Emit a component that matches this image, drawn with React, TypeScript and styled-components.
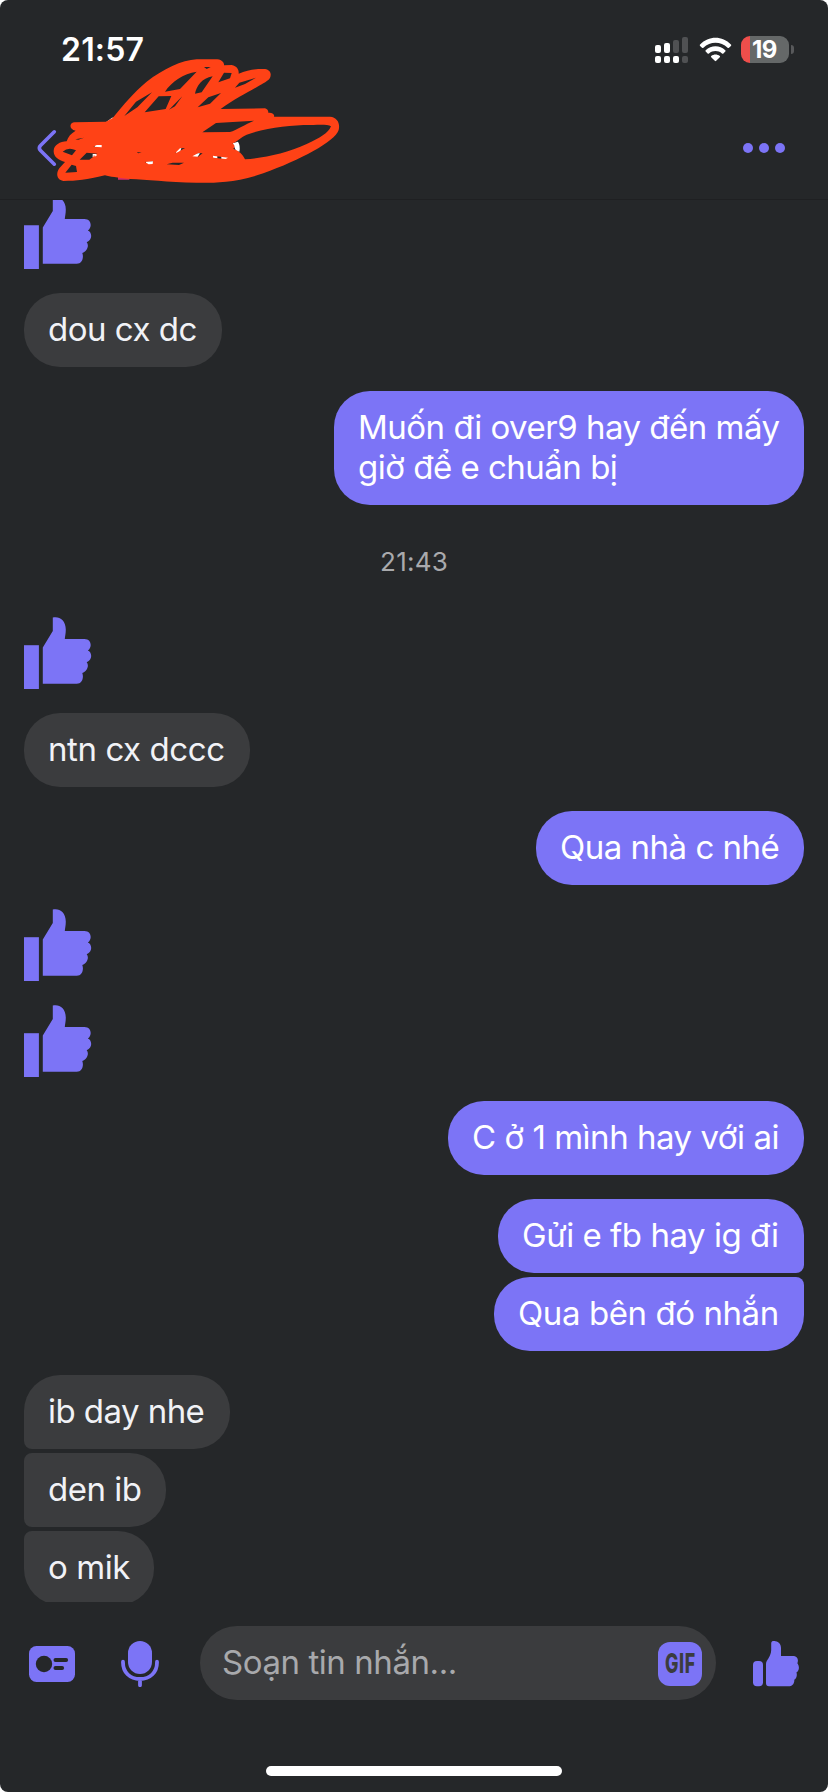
import React from "react";
import styled, { createGlobalStyle } from "styled-components";

const accent = "#7c74f6";
const surface = "#252729";
const raised = "#3b3c3e";

const GlobalStyle = createGlobalStyle`
  * { box-sizing: border-box; }
  body { margin: 0; background: #fff; font-family: Inter, "Noto Sans", sans-serif; }
`;

const Screen = styled.div`
  display: flex;
  flex-direction: column;
  width: 828px;
  height: 1792px;
  overflow: hidden;
  background: ${surface};
  border-radius: 8px;
`;

const Top = styled.header`
  position: relative;
  flex: none;
  height: 200px;
  border-bottom: 1px solid #1f2022;
`;

const StatusBar = styled.div`
  display: flex;
  align-items: center;
  height: 99px;
  padding: 0 34px 0 61px;
`;

const Clock = styled.span`
  color: #fff;
  font-size: 32px;
  font-weight: 600;
  letter-spacing: 0.2px;
  line-height: 40px;
  margin: 1px auto 0 0;
`;

const Signal = styled.svg`
  display: block;
  width: 33px;
  height: 26px;
  margin-right: 11px;
`;

const Wifi = styled.svg`
  display: block;
  width: 33px;
  height: 26px;
  margin-right: 9px;
`;

const Battery = styled.div`
  display: flex;
  align-items: center;
  justify-content: center;
  width: 48px;
  height: 27px;
  border-radius: 9px;
  background: linear-gradient(90deg, #ef4e4b 9.3px, #656868 9.3px);
  color: #fff;
  font-size: 24px;
  font-weight: 700;
  letter-spacing: -0.4px;
  padding-right: 1px;
`;

const BatteryTip = styled.i`
  width: 3px;
  height: 9px;
  margin-left: 2px;
  border-radius: 0 4px 4px 0;
  background: #58595b;
`;

const NavBar = styled.nav`
  display: flex;
  align-items: center;
  justify-content: space-between;
  height: 98px;
  padding: 0 43px 0 36px;
`;

const Glyph = styled.svg`
  display: block;
  flex: none;
`;

const Scribble = styled.svg`
  position: absolute;
  left: 0;
  top: 0;
  width: 360px;
  height: 190px;
`;

const Thread = styled.main`
  display: flex;
  flex: none;
  flex-direction: column;
  gap: 24px;
  height: 1402px;
  padding: 0 24px;
  overflow: hidden;
`;

const Group = styled.section<{ $mine?: boolean; $lift?: boolean }>`
  display: flex;
  flex: none;
  flex-direction: column;
  align-items: ${(p) => (p.$mine ? "flex-end" : "flex-start")};
  gap: 4px;
  margin-top: ${(p) => (p.$lift ? "-3px" : "0")};
`;

const Bubble = styled.p<{
  $mine?: boolean;
  $width: number;
  $spacing: number;
  $joinTop?: boolean;
  $joinBottom?: boolean;
}>`
  margin: 0;
  width: ${(p) => p.$width}px;
  padding: 16px 0 18px 24px;
  white-space: pre;
  font-size: 33px;
  line-height: 40px;
  letter-spacing: ${(p) => p.$spacing}px;
  color: ${(p) => (p.$mine ? "#fff" : "#f1f2f6")};
  background: ${(p) => (p.$mine ? accent : raised)};
  border-radius: 36px;
  ${(p) => p.$joinTop && `border-top-${p.$mine ? "right" : "left"}-radius: 8px;`}
  ${(p) => p.$joinBottom && `border-bottom-${p.$mine ? "right" : "left"}-radius: 8px;`}
`;

const Stamp = styled.time`
  flex: none;
  height: 64px;
  line-height: 66px;
  text-align: center;
  font-size: 26px;
  letter-spacing: 0.2px;
  color: #a9aaad;
`;

const Composer = styled.footer`
  display: flex;
  align-items: center;
  height: 122px;
  padding: 0 29px 0 29px;
`;

const Slot = styled.div<{ $gap: number }>`
  display: flex;
  margin: 2px ${(p) => p.$gap}px 0 0;
`;

const Field = styled.div`
  display: flex;
  align-items: center;
  justify-content: space-between;
  width: 516px;
  height: 74px;
  margin-right: 37px;
  padding: 0 14px 0 22px;
  border-radius: 37px;
  background: ${raised};
`;

const Placeholder = styled.span`
  color: #a8a9ac;
  font-size: 33px;
  letter-spacing: -0.43px;
  line-height: 40px;
  margin-bottom: 2px;
`;

const GifBadge = styled.div`
  display: flex;
  align-items: center;
  justify-content: center;
  width: 44px;
  height: 44px;
  margin-top: 2px;
  border-radius: 12px;
  background: ${accent};
`;

const GifLabel = styled.span`
  flex: none;
  color: ${raised};
  font-size: 27px;
  font-weight: 800;
  line-height: 32px;
  letter-spacing: 1px;
  transform: scaleX(0.66);
`;

const Like = () => (
  <Glyph width="68" height="72" viewBox="0 0 68 72" fill={accent}>
    <path d="M0 28.2H14.9V72H0Z" />
    <path d="M18.8 30.6L28.8 14V.6C35 -1 41.8 3 41.8 12.5C41.8 17 41 19 40.8 22H60.5C67.5 22 68.5 30.5 63.8 33.6C68 35 69 43 62.7 45.3C65.5 48.5 63 54.5 58.3 56C60 60.5 58.2 66.7 52.7 66.7H18.8Z" />
  </Glyph>
);

const LikeButton = () => (
  <Glyph width="46" height="46" viewBox="0 0 46 46" fill={accent}>
    <rect x="0" y="20" width="10" height="25.3" rx="4" />
    <path d="M13 23C13 19 18 16 18.2 9V2.5C18.2 -.5 21 0 22.5 .3C26 1 28 3.5 28 7V15H39.5C44.5 15 45.8 18.5 44.4 22.3C47 26 46 30 43.4 31.5C44.5 34 43.4 37.5 41.3 38.8C41.5 43 39 45.3 35.5 45.3H16C14 45.3 13 44.3 13 42.3Z" />
  </Glyph>
);

const CardIcon = () => (
  <Glyph width="46" height="36" viewBox="0 0 46 36">
    <rect width="46" height="36" rx="7.5" fill={accent} />
    <circle cx="15" cy="18" r="8.2" fill={surface} />
    <rect x="24.5" y="12" width="14.6" height="4" rx="2" fill={surface} />
    <rect x="24.5" y="20" width="10.6" height="4" rx="2" fill={surface} />
  </Glyph>
);

const MicIcon = () => (
  <Glyph width="38" height="46" viewBox="0 0 38 46">
    <rect x="7" y="0" width="24" height="33" rx="12" fill={accent} />
    <path d="M2 20.7V21.5C2 31.5 9 38 19 38S36 31.5 36 21.5V20.7M19 38V44.2" fill="none" stroke={accent} strokeWidth="3.8" strokeLinecap="round" />
  </Glyph>
);

const SignalIcon = () => (
  <Signal viewBox="0 0 33 26">
    <g fill="#fff">
      <rect x="0" y="8" width="6" height="8" rx="2" />
      <rect x="9" y="6" width="6" height="10" rx="2" />
      <rect x="0" y="19" width="6" height="7" rx="2" />
      <rect x="9" y="19" width="6" height="7" rx="2" />
      <rect x="18" y="19" width="6" height="7" rx="2" />
    </g>
    <g fill="#505153">
      <rect x="18" y="3" width="6" height="13" rx="2" />
      <rect x="27" y="0" width="6" height="16" rx="2" />
      <rect x="27" y="19" width="6" height="7" rx="2" />
    </g>
  </Signal>
);

const WifiIcon = () => (
  <Wifi viewBox="0 0 33 26" fill="#fff">
    <path d="M1.1 7.5C9.5 -1.5 23.5 -1.5 31.9 7.5Q32.6 8.2 31.9 8.9L30 10.7Q29.3 11.4 28.6 10.7C21.8 4 11.2 4 4.4 10.7Q3.7 11.4 3 10.7L1.1 8.9Q.4 8.2 1.1 7.5Z" />
    <path d="M6.7 13.2C12 8 21 8 26.3 13.2Q27 13.9 26.3 14.6L24.4 16.4Q23.7 17.1 23 16.4C19.2 13.2 13.8 13.2 10 16.4Q9.3 17.1 8.6 16.4L6.7 14.6Q6 13.9 6.7 13.2Z" />
    <path d="M12.2 19C14.8 17 18.2 17 20.8 19Q21.4 19.6 20.8 20.2L17.2 23.8Q16.5 24.5 15.8 23.8L12.2 20.2Q11.6 19.6 12.2 19Z" />
  </Wifi>
);

const NameScribble = () => (
  <Scribble viewBox="0 0 1080 570">
    <path fill="#fff" d="M318 367L336 353L380 348L370 372ZM284 433H308V445H284ZM278 462H294V471H278ZM438 484H460V495H438ZM525 440H545L541 455L528 462ZM578 460H600L592 472H576ZM638 464H652V476H638ZM664 468H685V478H664ZM698 430L714 425Q722 438 718 455L708 452Z" />
    <path fill="#d62a68" d="M354 530H388V539H354Z" />
    <path
      fill="#ff4216"
      fillRule="evenodd"
      d="M222 367L318 365L338 354C370 315 400 278 440 245C490 208 545 180 590 178H652C668 180 673 190 672 196L695 195C712 199 717 210 716 221C745 208 775 206 795 207C813 210 816 225 808 237C790 255 720 284 662 327L795 325C805 328 805 335 805 338C820 338 824 345 822 350H990C1012 352 1021 370 1016 390C1005 425 900 480 790 520C700 550 640 548 590 548C500 547 440 538 390 537C350 533 330 530 315 526C260 540 230 543 190 543C170 540 167 520 178 505L195 486C175 480 160 470 161 452C162 435 180 425 200 424C204 410 213 400 227 392C206 388 208 369 222 367Z
      M735 478C728 461 716 453 700 446C706 439 704 434 697 431C712 425 724 410 740 404C800 382 880 374 940 375C965 374 985 374 993 379C985 400 960 413 920 432C860 460 790 474 735 478Z
      M607 397L648 369L762 362C735 373 710 390 690 396Z
      M495 275C515 245 550 220 590 215L540 267Z
      M585 281C590 258 605 235 638 229L605 277Z
      M655 247L672 218L695 219L690 235Z
      M705 263L718 248L768 233L735 252Z
      M373 348L408 305L456 277L412 322Z
      M434 337L476 289L514 288L497 327Z
      M507 329L547 289L525 319Z
      M593 322L625 292L663 279L630 311Z
      M612 201H632L620 207Z
      M188 455Q205 440 228 451L216 466Z
      M239 479L260 458L292 461L268 479Z
      M196 518L215 494L228 498L231 516Z
      M226 418L252 413L235 419Z
      M280 440L290 435H305V442Z
      M278 468L291 464L288 469Z
      M525 460L540 445L555 444L533 457Z
      M577 469L595 459L608 460L594 470Z
      M638 467L684 473L677 477L640 473Z
      M435 486L459 483L458 492L446 493Z
      M500 493L518 488L552 488L537 495Z
      M410 457L425 457L415 460Z"
    />
  </Scribble>
);

export default function App() {
  return (
    <>
      <GlobalStyle />
      <Screen>
        <Top>
          <StatusBar>
            <Clock>21:57</Clock>
            <SignalIcon />
            <WifiIcon />
            <Battery>19</Battery>
            <BatteryTip />
          </StatusBar>
          <NavBar>
            <Glyph width="22" height="38" viewBox="0 0 22 38">
              <path d="M18.3 2.8L4.5 16.5Q2 19 4.5 21.5L18.3 35.2" fill="none" stroke={accent} strokeWidth="3.6" strokeLinecap="round" />
            </Glyph>
            <Glyph width="42" height="10" viewBox="0 0 42 10" fill={accent}>
              <circle cx="5" cy="5" r="5" />
              <circle cx="21" cy="5" r="5" />
              <circle cx="37" cy="5" r="5" />
            </Glyph>
          </NavBar>
          <NameScribble />
        </Top>
        <Thread>
          <Group $lift><Like /></Group>
          <Group><Bubble $width={198} $spacing={-0.5}>dou cx dc</Bubble></Group>
          <Group $mine>
            <Bubble $mine $width={470} $spacing={-0.5}>{"Muốn đi over9 hay đến mấy\ngiờ để e chuẩn bị"}</Bubble>
          </Group>
          <Stamp>21:43</Stamp>
          <Group><Like /></Group>
          <Group><Bubble $width={226} $spacing={-0.42}>ntn cx dccc</Bubble></Group>
          <Group $mine><Bubble $mine $width={268} $spacing={-0.5}>Qua nhà c nhé</Bubble></Group>
          <Group><Like /></Group>
          <Group><Like /></Group>
          <Group $mine><Bubble $mine $width={356} $spacing={-0.48}>C ở 1 mình hay với ai</Bubble></Group>
          <Group $mine>
            <Bubble $mine $width={306} $spacing={-0.46} $joinBottom>Gửi e fb hay ig đi</Bubble>
            <Bubble $mine $width={310} $spacing={-0.42} $joinTop>Qua bên đó nhắn</Bubble>
          </Group>
          <Group>
            <Bubble $width={206} $spacing={-0.55} $joinBottom>ib day nhe</Bubble>
            <Bubble $width={142} $spacing={-0.5} $joinTop $joinBottom>den ib</Bubble>
            <Bubble $width={130} $spacing={-0.45} $joinTop>o mik</Bubble>
          </Group>
        </Thread>
        <Composer>
          <Slot $gap={46}><CardIcon /></Slot>
          <Slot $gap={41}><MicIcon /></Slot>
          <Field>
            <Placeholder>Soạn tin nhắn...</Placeholder>
            <GifBadge><GifLabel>GIF</GifLabel></GifBadge>
          </Field>
          <Slot $gap={0}><LikeButton /></Slot>
        </Composer>
        <HomeBar />
      </Screen>
    </>
  );
}

const HomeBar = styled.div`
  width: 296px;
  height: 10px;
  margin: 42px auto 0;
  border-radius: 5px;
  background: #fff;
`;
